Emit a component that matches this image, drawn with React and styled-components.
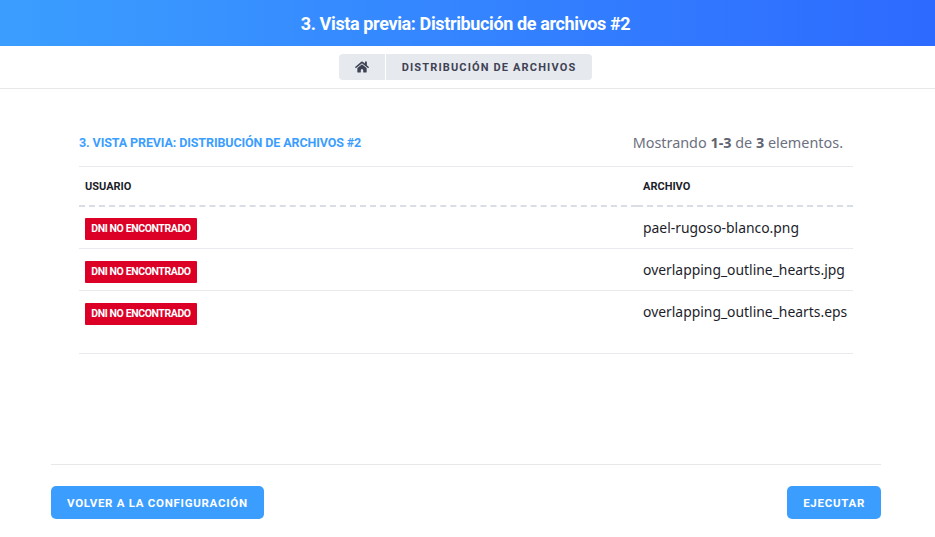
import React from 'react'
import styled, { createGlobalStyle } from 'styled-components'
import { FaHome } from 'react-icons/fa'

const rows = [
    { id: 1, file: 'pael-rugoso-blanco.png' },
    { id: 2, file: 'overlapping_outline_hearts.jpg' },
    { id: 3, file: 'overlapping_outline_hearts.eps' },
]

function App() {
    return (
        <Page>
            <GlobalStyle />
            <Header>3. Vista previa: Distribución de archivos #2</Header>
            <CrumbBar>
                <Crumbs>
                    <HomeCrumb><FaHome /></HomeCrumb>
                    <Crumb>Distribución de archivos</Crumb>
                </Crumbs>
            </CrumbBar>
            <Content>
                <Summary>
                    <Title>3. Vista previa: Distribución de archivos #2</Title>
                    <Count>Mostrando <b>1-3</b> de <b>3</b> elementos.</Count>
                </Summary>
                <Table>
                    <thead>
                        <tr>
                            <UserHead>Usuario</UserHead>
                            <FileHead>Archivo</FileHead>
                        </tr>
                    </thead>
                    <tbody>
                        {rows.map((row) => (
                            <Row key={row.id}>
                                <td><Badge>DNI no encontrado</Badge></td>
                                <td>{row.file}</td>
                            </Row>
                        ))}
                    </tbody>
                </Table>
            </Content>
            <Footer>
                <Button>Volver a la configuración</Button>
                <Button>Ejecutar</Button>
            </Footer>
        </Page>
    )
}

const GlobalStyle = createGlobalStyle`
    body{
        margin: 0;
        background-color: #fff;
        font-family: "Noto Sans", sans-serif;
    }
`;

const Page = styled.div`
    height: 537px;
    display: flex;
    flex-direction: column;
    overflow: hidden;
`;

const Header = styled.div`
    height: 46px;
    padding-right: 4px;
    display: flex;
    align-items: center;
    justify-content: center;
    background: linear-gradient(90deg, #3b9eff, #2d6aff);
    color: #fff;
    font-family: "Roboto", sans-serif;
    font-size: 18px;
    font-weight: 700;
    letter-spacing: -0.37px;
`;

const CrumbBar = styled.div`
    height: 43px;
    box-sizing: border-box;
    padding: 8px 4px 0 0;
    display: flex;
    justify-content: center;
    align-items: flex-start;
    border-bottom: 1px solid #e8e8e8;
`;

const Crumbs = styled.div`
    display: flex;
    height: 26px;
    border-radius: 4px;
    overflow: hidden;
    gap: 1px;
    color: #3f4254;
`;

const HomeCrumb = styled.div`
    width: 46px;
    display: flex;
    align-items: center;
    justify-content: center;
    background-color: #e6e9ee;
    font-size: 14px;
`;

const Crumb = styled.div`
    width: 206px;
    display: flex;
    align-items: center;
    justify-content: center;
    background-color: #e6e9ee;
    font-family: "Roboto", sans-serif;
    font-size: 11px;
    font-weight: 700;
    letter-spacing: 1.15px;
    text-transform: uppercase;
`;

const Content = styled.div`
    flex: 1;
    padding: 36px 82px 0 79px;
`;

const Summary = styled.div`
    height: 41px;
    box-sizing: border-box;
    display: flex;
    align-items: center;
    justify-content: space-between;
    padding: 0 10px 7px 0;
`;

const Title = styled.h2`
    margin: 0;
    color: #3b9eff;
    font-family: "Roboto", sans-serif;
    font-size: 12.5px;
    font-weight: 700;
    letter-spacing: -0.11px;
    text-transform: uppercase;
`;

const Count = styled.div`
    color: #6c7080;
    font-size: 14.4px;
    b{
        font-weight: 700;
        color: #5f6370;
    }
`;

const Table = styled.table`
    width: 774px;
    border-collapse: collapse;
    table-layout: fixed;
    border-top: 1px solid #e8eaee;
    border-bottom: 1px solid #e8eaee;
    color: #1c1d2a;
    td{
        padding: 0 6px;
        vertical-align: top;
    }
`;

const UserHead = styled.th`
    width: 546px;
    height: 38px;
    padding: 0 6px;
    box-sizing: content-box;
    text-align: left;
    font-family: "Roboto", sans-serif;
    font-size: 11px;
    font-weight: 700;
    text-transform: uppercase;
    border-bottom: 2px dashed #d8dde6;
`;

const FileHead = styled(UserHead)`
    width: auto;
`;

const Row = styled.tr`
    height: 42px;
    font-size: 13.9px;
    line-height: 20px;
    border-bottom: 1px solid #e8eaee;
    td{
        padding-top: 11px;
    }
    &:last-child{
        height: 63px;
        border-bottom: 0;
    }
`;

const Badge = styled.span`
    display: block;
    width: 112px;
    height: 22px;
    line-height: 22px;
    text-align: center;
    white-space: nowrap;
    background-color: #dc0027;
    color: #fff;
    border-radius: 1px;
    font-family: "Roboto", sans-serif;
    font-size: 10.5px;
    font-weight: 700;
    letter-spacing: -0.4px;
    text-transform: uppercase;
    tr + tr &{
        margin-top: 1px;
    }
`;

const Footer = styled.div`
    margin: 0 54px 18px 51px;
    padding-top: 21px;
    display: flex;
    justify-content: space-between;
    border-top: 1px solid #e8e8e8;
`;

const Button = styled.button`
    height: 33px;
    padding: 0 16px;
    border: 0;
    border-radius: 5px;
    background-color: #3b9eff;
    color: #fff;
    font-family: "Roboto", sans-serif;
    font-size: 11.5px;
    font-weight: 700;
    letter-spacing: 0.72px;
    text-transform: uppercase;
`;

export default App
